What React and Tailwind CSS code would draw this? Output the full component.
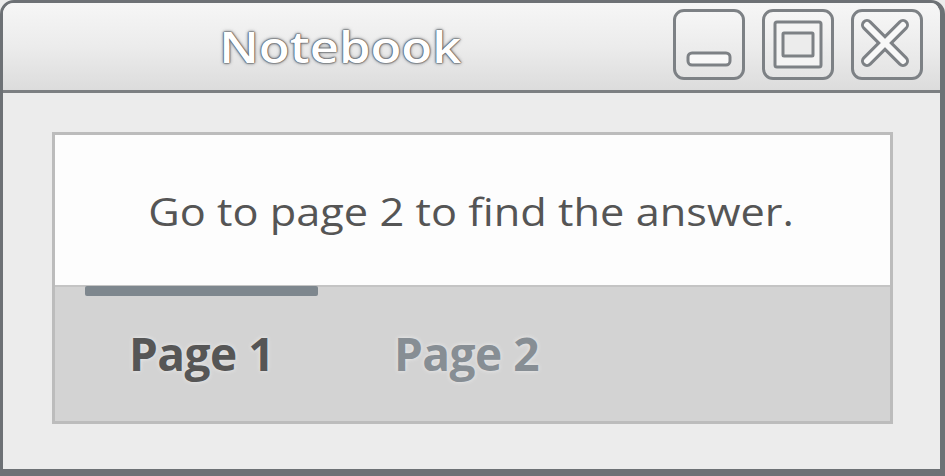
export default function App() {
  return (
    <div className="w-[945px] h-[476px] bg-[#ececec] font-['Open_Sans',sans-serif]">
      <div className="w-full h-full border-t-[3px] border-l-[3px] border-r-[5px] border-b-[7px] border-[#6d7175] rounded-t-[14px] bg-[#ececec] flex flex-col overflow-hidden">
        <TitleBar />
        <div className="flex-1 flex flex-col pt-[39px] pb-[45px] pl-[49px] pr-[47px]">
          <div className="flex-1 flex flex-col border-[3px] border-[#bcbcbc]">
            <div className="h-[150px] bg-[#fdfdfd] flex items-center justify-center">
              <p className="text-[38px] font-medium text-[#555555] scale-x-[1.14] pt-[2px] pr-[2px]">
                Go to page 2 to find the answer.
              </p>
            </div>
            <div className="flex-1 bg-[#d3d3d3] border-t-[2px] border-[#c4c4c4] relative">
              <div className="absolute left-[30px] top-[-1px] w-[233px] h-[10px] rounded-[2px] bg-[#7e878e]" />
              <div className="flex h-full items-center pl-[30px] pb-[2px]">
                <div className="w-[233px] text-center text-[46px] font-bold text-[#565656] tracking-[-0.5px] [text-shadow:0_0_4px_#eeeeee]">
                  Page 1
                </div>
                <div className="w-[233px] ml-[32px] text-center text-[46px] font-bold text-[#878e94] tracking-[-0.5px] [text-shadow:0_0_4px_#eeeeee]">
                  Page 2
                </div>
              </div>
            </div>
          </div>
        </div>
      </div>
    </div>
  );
}

function TitleBar() {
  return (
    <div className="h-[90px] shrink-0 flex items-center border-b-[3px] border-[#7c7f82] bg-gradient-to-b from-[#f6f6f6] via-[#ececec] to-[#dcdcdc]">
      <div className="flex-1 text-center pl-[4px] pb-[2px]">
        <span className="inline-block text-[44px] font-semibold text-white scale-x-[1.15] [text-shadow:0_0_1px_#4f5358,0_0_1px_#4f5358,0_0_2px_#5f6368,0_0_2px_#6f7378,0_0_4px_#9a9ea2]">
          Notebook
        </span>
      </div>
      <div className="flex gap-[17px] pr-[17px] pb-[4px]">
        <WinButton>
          <rect x="15" y="44" width="42" height="12" rx="4" fill="#f8f8f8" stroke="#7d8185" strokeWidth="3" />
        </WinButton>
        <WinButton>
          <rect x="13" y="13" width="46" height="45" rx="2" fill="#f4f4f4" stroke="#7d8185" strokeWidth="3" />
          <rect x="21" y="24" width="30" height="23" rx="1" fill="#ececec" stroke="#7d8185" strokeWidth="3" />
        </WinButton>
        <WinButton>
          <line x1="16" y1="16" x2="52" y2="52" stroke="#7d8185" strokeWidth="12" strokeLinecap="round" />
          <line x1="52" y1="16" x2="16" y2="52" stroke="#7d8185" strokeWidth="12" strokeLinecap="round" />
          <line x1="16" y1="16" x2="52" y2="52" stroke="#f8f8f8" strokeWidth="6" strokeLinecap="round" />
          <line x1="52" y1="16" x2="16" y2="52" stroke="#f8f8f8" strokeWidth="6" strokeLinecap="round" />
        </WinButton>
      </div>
    </div>
  );
}

function WinButton({ children }) {
  return (
    <div className="w-[72px] h-[71px] rounded-[11px] border-[3px] border-[#7d8185] bg-gradient-to-b from-[#f6f6f6] to-[#e4e4e4] flex items-center justify-center">
      <svg width="72" height="71" viewBox="0 0 72 71" className="shrink-0">
        {children}
      </svg>
    </div>
  );
}
